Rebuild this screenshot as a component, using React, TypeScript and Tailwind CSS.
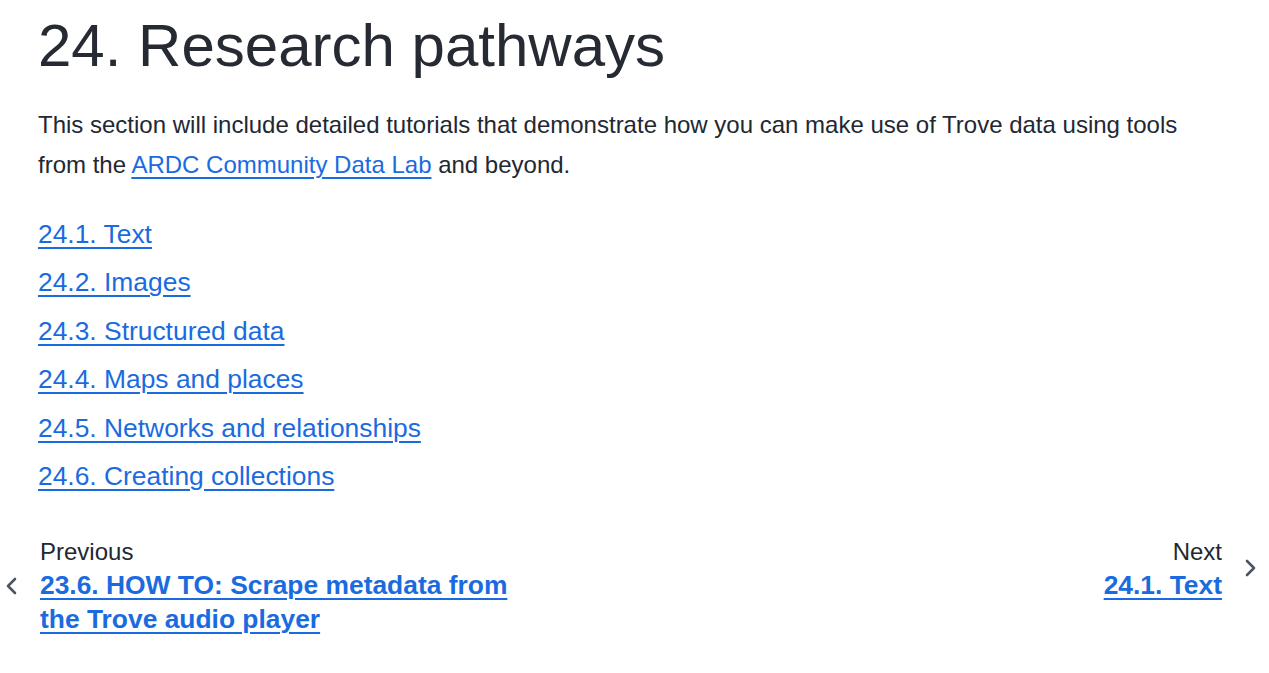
import React from "react";

const linkCls =
  "text-[#1a6be0] underline decoration-[2px] underline-offset-[0.16em]";

export default function App() {
  const items = [
    "24.1. Text",
    "24.2. Images",
    "24.3. Structured data",
    "24.4. Maps and places",
    "24.5. Networks and relationships",
    "24.6. Creating collections",
  ];
  return (
    <div className="w-[1269px] h-[673px] bg-white font-['Liberation_Sans',Arial,sans-serif] text-[#222832] overflow-hidden">
      <div className="px-[38px]">
        <h1 className="text-[60px] leading-[1.15] pt-[11px] text-[#262b33]">
          24. Research pathways
        </h1>
        <p className="text-[24px] leading-[40px] mt-[25px]">
          This section will include detailed tutorials that demonstrate how you can make use of Trove data using tools
          from the <a className={linkCls}>ARDC Community Data Lab</a> and beyond.
        </p>
        <ul className="mt-[25px] flex flex-col">
          {items.map((t) => (
            <li key={t} className="text-[26.4px] leading-[48.4px]">
              <a className={linkCls}>{t}</a>
            </li>
          ))}
        </ul>
      </div>
      <div className="mt-[36px] flex justify-between items-start">
        <div className="flex items-start">
          <svg width="14" height="20" viewBox="0 0 14 20" className="ml-[5px] mt-[40px] mr-[21px]">
            <polyline points="10,3 3,10 10,17" fill="none" stroke="#4b5563" strokeWidth="2.6" strokeLinecap="round" strokeLinejoin="round" />
          </svg>
          <div className="flex flex-col">
            <span className="text-[24px] leading-[32px]">Previous</span>
            <a className={"text-[26.4px] leading-[34px] font-bold max-w-[490px] " + linkCls}>
              23.6. HOW TO: Scrape metadata from the Trove audio player
            </a>
          </div>
        </div>
        <div className="flex items-start">
          <div className="flex flex-col items-end">
            <span className="text-[24px] leading-[32px]">Next</span>
            <a className={"text-[26.4px] leading-[34px] font-bold " + linkCls}>24.1. Text</a>
          </div>
          <svg width="14" height="20" viewBox="0 0 14 20" className="ml-[21px] mr-[12px] mt-[22px]">
            <polyline points="4,3 11,10 4,17" fill="none" stroke="#4b5563" strokeWidth="2.6" strokeLinecap="round" strokeLinejoin="round" />
          </svg>
        </div>
      </div>
    </div>
  );
}
